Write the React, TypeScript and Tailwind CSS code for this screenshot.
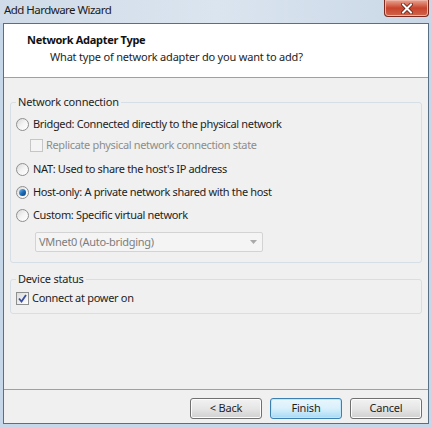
import React from "react";

const font = { fontFamily: '"Noto Sans", "Open Sans", sans-serif' };

function Radio({ checked, label }: { checked?: boolean; label: string }) {
  return (
    <div className="flex h-[16px] items-center pl-[5px]">
      <span className="flex h-[13px] w-[13px] items-center justify-center rounded-full border border-[#8e8f8f] bg-gradient-to-br from-[#d8d8d8] via-[#f4f4f4] to-[#ffffff]">
        {checked && (
          <span className="h-[7px] w-[7px] rounded-full bg-gradient-to-br from-[#7fc0f0] via-[#1f6fb8] to-[#0c3e7a]" />
        )}
      </span>
      <span className="ml-[4px] whitespace-nowrap text-[11px] leading-[16px] tracking-[-0.35px] text-[#1e1e1e]">{label}</span>
    </div>
  );
}

function Button({ label, primary }: { label: string; primary?: boolean }) {
  return (
    <div
      className={
        "flex h-[21px] w-[72px] items-center justify-center rounded-[3px] border text-[11px] tracking-[-0.2px] text-[#1e1e1e] " +
        (primary
          ? "border-[#3c7fb1] bg-gradient-to-b from-[#eaf6fd] via-[#d9f0fc] to-[#a7d9f5] shadow-[inset_0_0_0_1px_#bfe6fa]"
          : "border-[#707070] bg-gradient-to-b from-[#f2f2f2] via-[#e6e6e6] to-[#d0d0d0] shadow-[inset_0_0_0_1px_#fcfcfc]")
      }
    >
      {label}
    </div>
  );
}

export default function App() {
  return (
    <div className="flex h-[427px] w-[432px] flex-col bg-[#c7d7ea]" style={font}>
      {/* title bar */}
      <div className="flex h-[23px] items-start bg-gradient-to-r from-[#cfdbe8] via-[#dbe5f0] to-[#c9d7e6]">
        <span className="ml-[4px] mt-[2px] text-[11.5px] leading-[16px] tracking-[-0.55px] text-[#1b1b1b]">Add Hardware Wizard</span>
        <div className="ml-auto mr-[3px] flex h-[17px] w-[45px] items-center justify-center rounded-b-[4px] border border-t-0 border-[#7a2a1e] bg-gradient-to-b from-[#e8a493] via-[#c8432b] to-[#d0654a] shadow-[inset_0_0_0_1px_#eeb4a6]">
          <svg width="12" height="11" viewBox="0 0 12 11">
            <path d="M2 1.5 L10 9.5 M10 1.5 L2 9.5" stroke="#5a1a10" strokeWidth="3.6" strokeLinecap="square" />
            <path d="M2 1.5 L10 9.5 M10 1.5 L2 9.5" stroke="#ffffff" strokeWidth="2" strokeLinecap="square" />
          </svg>
        </div>
      </div>

      {/* client area */}
      <div className="mx-[3px] mb-[3px] flex flex-1 flex-col border border-[#5b6f84] bg-[#f0f0f0]">
        <div className="flex h-[54px] flex-col border-b border-[#a0a0a0] bg-white">
          <span className="ml-[23px] mt-[8px] text-[11px] font-bold leading-[16px] tracking-[-0.3px] text-[#111]">Network Adapter Type</span>
          <span className="ml-[46px] mt-[1px] text-[11px] leading-[16px] tracking-[-0.2px] text-[#1e1e1e]">What type of network adapter do you want to add?</span>
        </div>

        <div className="flex flex-1 flex-col px-[6px]">
          <fieldset className="mt-[16px] rounded-[3px] border border-[#d5dfe5] px-0 pb-[10px]">
            <legend className="ml-[5px] px-[2px] text-[11px] leading-[16px] tracking-[-0.2px] text-[#1e1e1e]">Network connection</legend>
            <div className="mt-[6px]">
              <Radio label="Bridged: Connected directly to the physical network" />
            </div>
            <div className="ml-[19px] mt-[5px] flex h-[16px] items-center">
              <span className="h-[13px] w-[13px] border border-[#c6c6c6] bg-[#f4f4f4]" />
              <span className="ml-[3px] whitespace-nowrap text-[11px] leading-[16px] tracking-[-0.35px] text-[#8d8d8d]">Replicate physical network connection state</span>
            </div>
            <div className="mt-[8px]">
              <Radio label="NAT: Used to share the host's IP address" />
            </div>
            <div className="mt-[7px]">
              <Radio checked label="Host-only: A private network shared with the host" />
            </div>
            <div className="mt-[7px]">
              <Radio label="Custom: Specific virtual network" />
            </div>
            <div className="ml-[24px] mt-[9px] flex h-[20px] w-[228px] items-center rounded-[2px] border border-[#d3d3d3] bg-[#f4f4f4] pl-[3px] pr-[5px]">
              <span className="text-[11px] leading-[16px] tracking-[-0.3px] text-[#7d7d7d]">VMnet0 (Auto-bridging)</span>
              <svg className="ml-auto" width="7" height="4" viewBox="0 0 7 4">
                <path d="M0 0 H7 L3.5 4 Z" fill="#a9a9a9" />
              </svg>
            </div>
          </fieldset>

          <fieldset className="mt-[8px] rounded-[3px] border border-[#d5dfe5] px-0 pb-[7px]">
            <legend className="ml-[5px] px-[2px] text-[11px] leading-[16px] tracking-[-0.2px] text-[#1e1e1e]">Device status</legend>
            <div className="mt-[3px] flex h-[16px] items-center pl-[5px]">
              <span className="flex h-[13px] w-[13px] items-center justify-center border border-[#8e8f8f] bg-gradient-to-br from-[#dcdcdc] to-[#ffffff]">
                <svg width="9" height="9" viewBox="0 0 9 9">
                  <path d="M1 4.5 L3.5 7.5 L8 1" fill="none" stroke="#3b4e9b" strokeWidth="1.8" />
                </svg>
              </span>
              <span className="ml-[3px] whitespace-nowrap text-[11px] leading-[16px] tracking-[-0.3px] text-[#1e1e1e]">Connect at power on</span>
            </div>
          </fieldset>
        </div>

        <div className="flex h-[34px] items-start justify-end gap-[8px] border-t border-[#a0a0a0] pr-[6px] pt-[8px]">
          <Button label="< Back" />
          <Button label="Finish" primary />
          <Button label="Cancel" />
        </div>
      </div>
    </div>
  );
}
